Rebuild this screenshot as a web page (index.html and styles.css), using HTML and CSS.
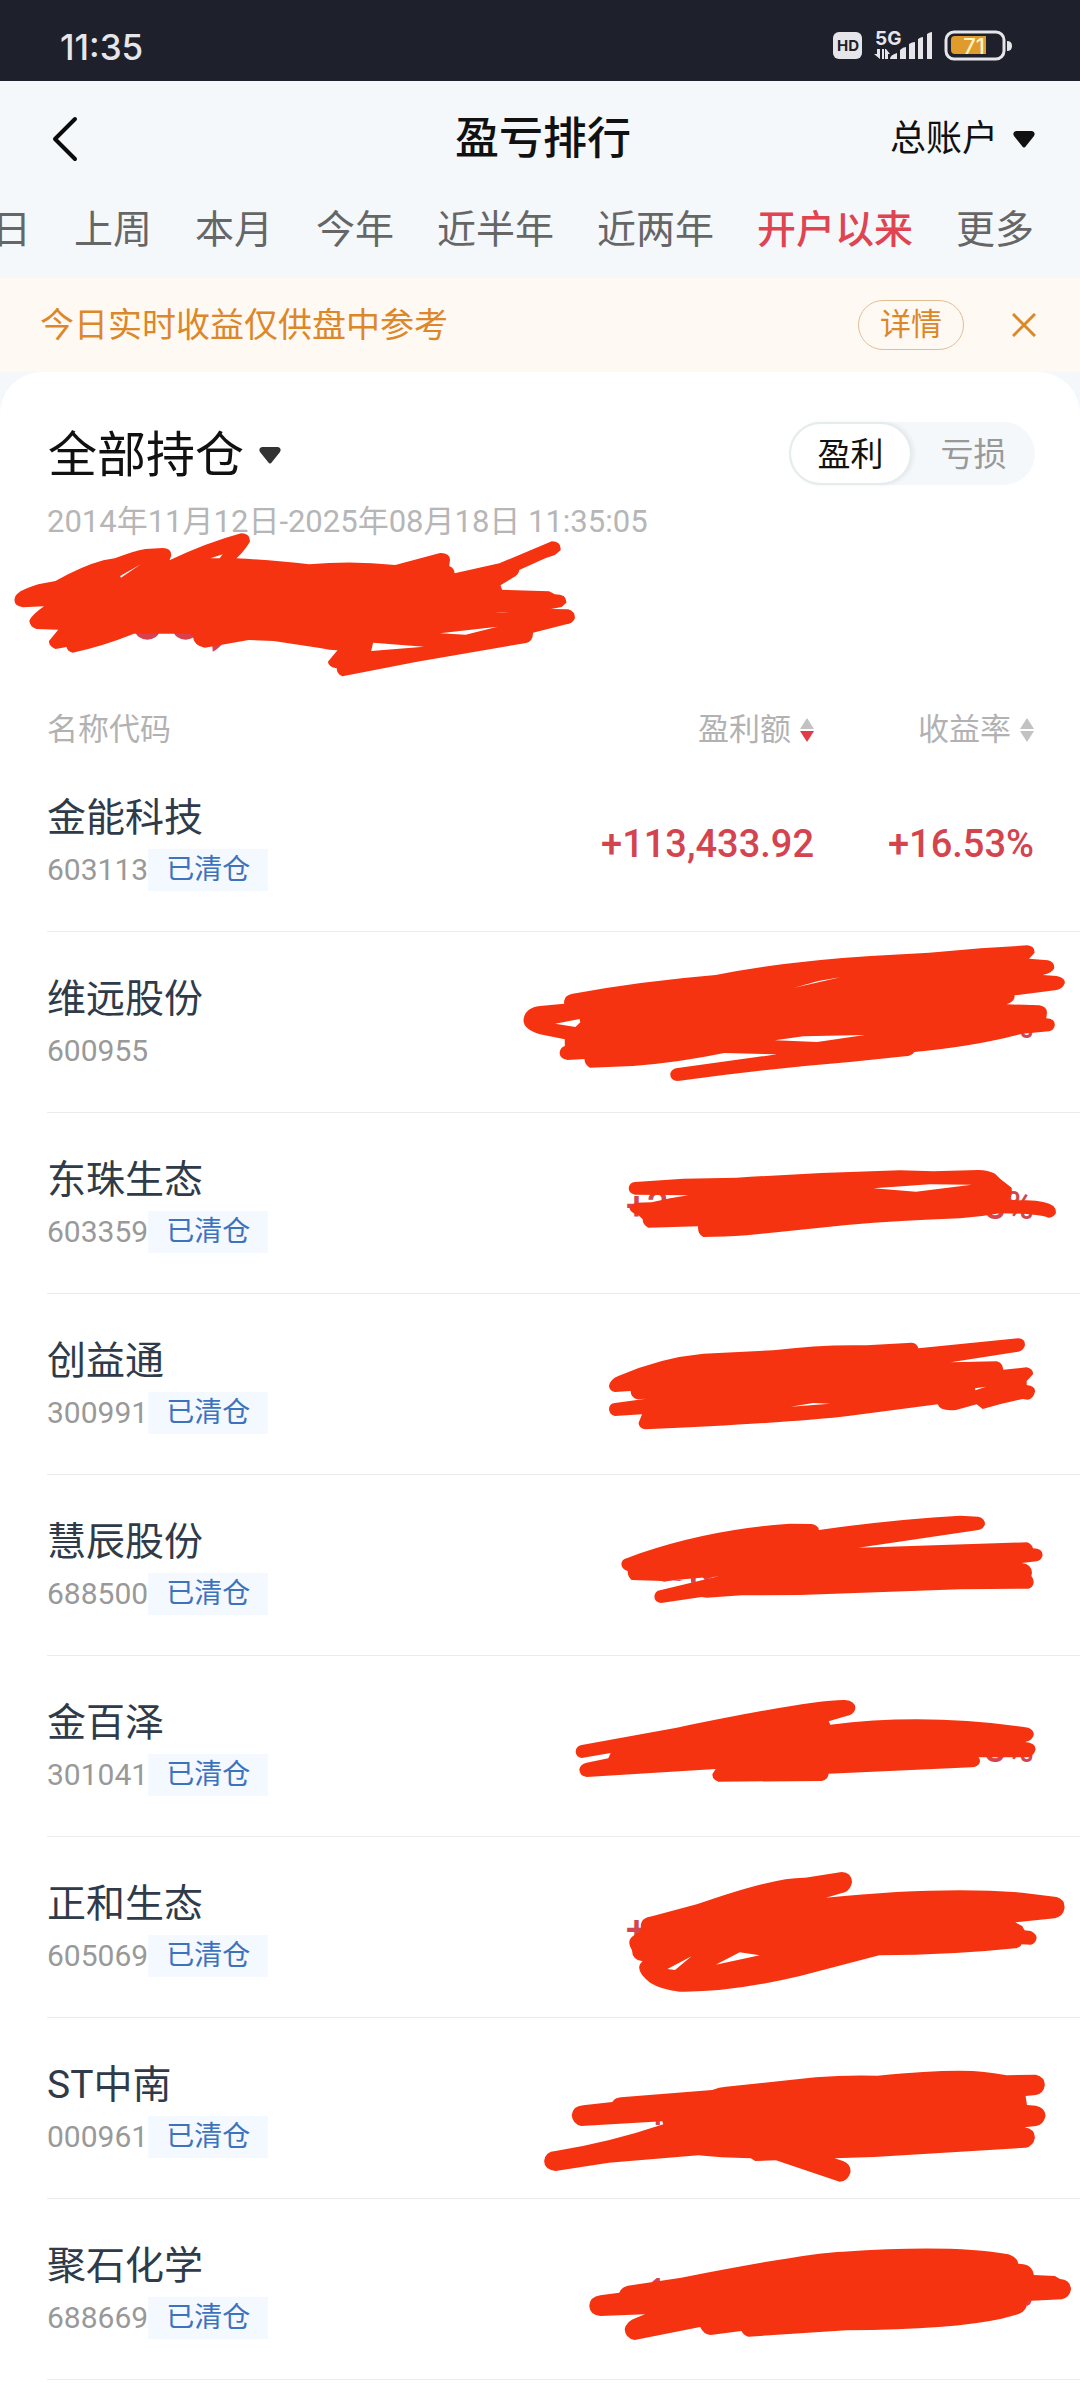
FILE: index.html
```html
<!DOCTYPE html>
<html lang="zh-CN">
<head>
<meta charset="utf-8">
<meta name="viewport" content="width=device-width, initial-scale=1">
<title>盈亏排行</title>
<link rel="stylesheet" href="styles.css">
</head>
<body>
<div class="status">
  <span class="clock">11:35</span>
  <svg class="status-icons" viewBox="833 27 179 41" width="179" height="41" role="img" aria-label="HD 5G 71">
    <rect x="833" y="33" width="29" height="27" rx="6" fill="#e6e6ea"/>
    <text x="848" y="52" class="hd-text" text-anchor="middle">HD</text>
    <text x="875" y="46" class="net-text">5G</text>
    <path d="M880 50v10l-6-5h3v-5zM882 60V50h2v10zM886 50l4 5h-2v5h-3V50z" fill="#e6e6ea"/>
    <path d="M890 60q0-4 7-6v6zM900 60v-9q3-3 6-3v12zM909 60V45q3-2 6-2v17zM918 60V40q3-2 5-2v22zM927 60V35q3-2 5-2v27z" fill="#e6e6ea"/>
    <rect x="946" y="33" width="58" height="27" rx="8" fill="none" stroke="#e6e6ea" stroke-width="3"/>
    <path d="M955 37h31v18h-31q-4 0-4-4V41q0-4 4-4z" fill="#df9b2b"/>
    <path d="M1007 42q5 0 5 5t-5 5z" fill="#e6e6ea"/>
    <text x="974" y="55" class="battery-text" text-anchor="middle">71</text>
  </svg>
</div>

<header class="top">
  <div class="titlebar">
    <button class="back" type="button" aria-label="返回">
      <svg viewBox="0 0 28 46" width="28" height="46"><path d="M24 3 4 23l20 20" fill="none" stroke="#0b0b0b" stroke-width="4" stroke-linecap="round" stroke-linejoin="round"/></svg>
    </button>
    <h1>盈亏排行</h1>
    <label class="picker account">
      <select aria-label="账户"><option>总账户</option></select>
      <svg viewBox="0 0 22 17" width="22" height="17"><path d="M3 0h16q4 1 2 5l-8 10q-2 3-4 0L1 5Q-1 1 3 0z" fill="#111"/></svg>
    </label>
  </div>
  <nav class="tabs">
    <button type="button">日</button>
    <button type="button">上周</button>
    <button type="button">本月</button>
    <button type="button">今年</button>
    <button type="button">近半年</button>
    <button type="button">近两年</button>
    <button type="button" class="active">开户以来</button>
    <button type="button">更多</button>
  </nav>
</header>

<div class="notice">
  <p>今日实时收益仅供盘中参考</p>
  <button type="button" class="detail">详情</button>
  <button type="button" class="close" aria-label="关闭">
    <svg viewBox="0 0 24 24" width="24" height="24"><path d="M1 1l22 22M23 1 1 23" stroke="#dc8728" stroke-width="3" fill="none"/></svg>
  </button>
</div>

<main class="card">
  <section class="summary">
    <div class="summary-head">
      <label class="picker holdings">
        <select aria-label="持仓范围"><option>全部持仓</option></select>
        <svg viewBox="0 0 22 17" width="22" height="17"><path d="M3 0h16q4 1 2 5l-8 10q-2 3-4 0L1 5Q-1 1 3 0z" fill="#333"/></svg>
      </label>
      <div class="switch">
        <label><input type="radio" name="side" checked><span>盈利</span></label>
        <label><input type="radio" name="side"><span>亏损</span></label>
      </div>
    </div>
    <p class="period">2014年11月12日-2025年08月18日 11:35:05</p>
    <div class="total">
      <svg class="scribble-total" viewBox="0 816 1568 498" preserveAspectRatio="none" aria-hidden="true">
        <path class="digits" d="M352 1080h66q-8 26-33 26t-33-26zM452 1080h66q-8 26-33 26t-33-26zM554 1115h28q-6 14-26 27z"/>
        <path d="M38 985C40 965 60 955 100 940L145 930Q215 885 270 868L300 862Q350 840 380 834L425 831Q450 832 447 855L443 868Q540 815 630 787Q655 788 653 812Q640 838 618 862Q720 868 808 880Q920 868 1033 882L1150 846Q1175 845 1176 866L1174 885Q1188 892 1188 907L1305 877L1442 811Q1468 812 1465 838L1450 852L1425 862L1357 897Q1356 912 1340 920L1308 943L1312 956L1435 961L1450 970Q1482 970 1480 995L1468 1008L1440 1014L1485 1015Q1505 1022 1502 1043Q1495 1058 1480 1060L1393 1085Q1393 1110 1375 1116L1090 1172L895 1216Q880 1210 880 1192Q858 1188 857 1172L882 1138Q860 1138 840 1132L715 1110L650 1107L535 1130Q508 1125 504 1098L497 1088L350 1088Q270 1125 190 1145Q175 1140 174 1128L145 1134Q127 1125 128 1110L152 1076L95 1074Q76 1065 77 1048Q85 1030 115 1006L60 1009Q36 1005 38 985ZM314 915L368 880L316 920ZM550 862L582 850L574 862ZM975 1115L1108 1127L970 1140ZM1150 1087L1300 1067L1217 1091ZM1270 1028L1330 1023L1295 1026Z"/>
      </svg>
    </div>
  </section>

  <table class="ranking">
    <thead>
      <tr>
        <th class="col-name" scope="col">名称代码</th>
        <th class="col-amount" scope="col"><button type="button">盈利额<svg viewBox="0 0 14 24" width="14" height="24"><path d="M7 0l7 11H0z" fill="#c2c2c2"/><path d="M0 13h14L7 24z" fill="#e23b47"/></svg></button></th>
        <th class="col-rate" scope="col"><button type="button">收益率<svg viewBox="0 0 14 24" width="14" height="24"><path d="M7 0l7 11H0zM0 13h14L7 24z" fill="#c2c2c2"/></svg></button></th>
      </tr>
    </thead>
    <tbody>
      <tr>
        <td><div class="name">金能科技</div><div class="meta"><span>603113</span><span class="badge">已清仓</span></div></td>
        <td class="num">+113,433.92</td>
        <td class="num rate">+16.53%</td>
      </tr>
      <tr>
        <td><div class="name">维远股份</div><div class="meta"><span>600955</span></div></td>
        <td class="num"></td>
        <td class="num rate">%
          <svg class="scribble wide" viewBox="0 753 1568 543" preserveAspectRatio="none" aria-hidden="true"><path d="M70 960Q72 942 95 938Q300 900 510 882Q720 840 960 825L1130 815L1280 802L1415 793Q1437 795 1436 815L1420 833L1475 838Q1495 843 1493 862Q1488 876 1460 882L1500 885Q1525 890 1524 906Q1518 925 1495 928L1378 943Q1380 960 1355 970L1450 973Q1473 978 1472 995L1470 1012Q1495 1012 1495 1032Q1493 1048 1478 1051L1400 1058Q1270 1095 1087 1113Q1080 1125 1060 1126L900 1143Q640 1165 400 1200Q378 1198 378 1178Q382 1163 400 1161L688 1120L535 1116Q400 1145 270 1155L145 1160Q130 1152 129 1134L80 1137Q58 1133 57 1116Q58 1100 72 1095L72 1075L0 1060Q-48 1045 -48 1018Q-45 980 0 975L70 968ZM44 1028L115 1014L117 1024L103 1038ZM682 1078L765 1066L943 1062L805 1083ZM738 920L808 900L872 889L815 902Z"/></svg>
        </td>
      </tr>
      <tr>
        <td><div class="name">东珠生态</div><div class="meta"><span>603359</span><span class="badge">已清仓</span></div></td>
        <td class="num"><span class="partial">+2</span></td>
        <td class="num rate">3%
          <svg class="scribble" viewBox="0 -84 1560 543" preserveAspectRatio="none" aria-hidden="true"><path d="M206 142Q208 124 225 123L370 113L530 110Q770 95 1020 88L1120 91L1255 87Q1285 88 1305 98L1322 115L1355 140Q1358 165 1345 177L1400 178Q1460 180 1480 195Q1490 205 1487 218Q1478 230 1465 230Q1430 217 1320 217Q1260 228 1200 232Q1020 238 860 252L560 283Q490 288 430 288Q413 280 414 256L265 260Q248 252 248 235L235 222Q210 215 208 200L225 185L275 184L330 172L385 163L225 161Q207 158 206 142ZM940 142L1110 130L1235 131L1068 152Z"/></svg>
        </td>
      </tr>
      <tr>
        <td><div class="name">创益通</div><div class="meta"><span>300991</span><span class="badge">已清仓</span></div></td>
        <td class="num"></td>
        <td class="num rate">
          <svg class="scribble" viewBox="0 459 1560 543" preserveAspectRatio="none" aria-hidden="true"><path d="M147 735Q150 715 175 705Q300 650 430 638L640 628Q780 610 920 613L1055 605Q1072 607 1075 622L1375 592Q1395 592 1395 612Q1392 628 1375 632L1172 664L1310 661Q1328 665 1330 686L1400 679Q1420 683 1419 700L1400 720L1400 732Q1427 735 1425 752Q1420 773 1403 776L1388 774Q1330 785 1268 804L1250 790L1188 807Q1140 812 1133 790L870 824Q700 845 255 865Q235 860 236 845L246 820L165 825Q147 820 147 804Q148 788 165 786L258 773L232 775Q212 770 212 750L165 753Q148 750 147 735ZM692 797L760 786L810 788ZM1245 742L1278 737L1246 748Z"/></svg>
        </td>
      </tr>
      <tr>
        <td><div class="name">慧辰股份</div><div class="meta"><span>688500</span><span class="badge">已清仓</span></div></td>
        <td class="num"></td>
        <td class="num rate">
          <svg class="scribble" viewBox="0 -18 1560 543" preserveAspectRatio="none" aria-hidden="true"><path class="digits" d="M290 296h80l-12 4-20-2-25 4zM393 285h14v20h-14zM425 285h50l-15 3-25 10z"/><path d="M184 250Q185 235 200 232L240 217Q450 145 690 128L755 129Q775 133 777 147Q1000 115 1200 104L1255 107Q1275 112 1275 130Q1270 145 1255 147L895 200L1400 184Q1415 188 1419 202Q1448 203 1448 222Q1445 238 1430 241L1385 246Q1415 250 1416 275L1414 285Q1422 295 1421 305Q1418 320 1405 323L1200 325L720 342L545 343L440 350L425 348L303 366Q283 363 283 345Q286 330 300 328L475 286L310 300L215 297Q203 288 203 270Q186 265 184 250Z"/></svg>
        </td>
      </tr>
      <tr>
        <td><div class="name">金百泽</div><div class="meta"><span>301041</span><span class="badge">已清仓</span></div></td>
        <td class="num"></td>
        <td class="num rate">3%
          <svg class="scribble" viewBox="0 525 1560 543" preserveAspectRatio="none" aria-hidden="true"><path d="M47 812Q48 795 65 792L350 740Q760 655 855 657Q885 660 886 680Q885 695 870 702L806 721L811 731Q1100 695 1405 740Q1423 748 1421 762Q1418 778 1395 783Q1427 785 1427 805Q1423 823 1405 829L1255 829Q1262 835 1259 845Q1253 858 1235 859L806 878Q803 897 785 900L475 902Q456 895 457 880L467 864L80 888Q58 885 58 865Q60 850 80 845L145 832L152 816L65 831Q48 828 47 812Z"/></svg>
        </td>
      </tr>
      <tr>
        <td><div class="name">正和生态</div><div class="meta"><span>605069</span><span class="badge">已清仓</span></div></td>
        <td class="num"><span class="partial">+</span></td>
        <td class="num rate">
          <svg class="scribble wide" viewBox="0 -12 1568 543" preserveAspectRatio="none" aria-hidden="true"><path d="M293 250Q295 230 325 226L455 190Q680 108 770 110L876 93Q905 95 906 123Q903 145 885 154L830 170Q1170 135 1400 155L1500 168Q1525 175 1523 202Q1520 225 1495 232L1380 244L1400 255L1407 268L1425 270Q1443 280 1442 292Q1438 310 1425 311L1398 310Q1395 320 1380 322Q1200 342 985 343L755 405Q550 455 405 452Q350 445 320 425Q270 385 298 361Q268 358 267 328Q250 300 270 285L292 270ZM370 384L440 346L392 387ZM510 371L580 334L638 343Z"/></svg>
        </td>
      </tr>
      <tr>
        <td><div class="name">ST中南</div><div class="meta"><span>000961</span><span class="badge">已清仓</span></div></td>
        <td class="num"></td>
        <td class="num rate">
          <svg class="scribble wide" viewBox="0 531 1568 543" preserveAspectRatio="none" aria-hidden="true"><path class="digits" d="M336 838h12v14h-12z"/><path d="M92 823Q95 795 125 793L210 783Q218 770 235 769L500 747Q520 738 540 737L800 709Q890 701 980 704Q1200 682 1290 693Q1325 697 1355 703L1440 701Q1466 708 1466 732Q1462 758 1440 762L1410 765L1414 792L1440 794Q1468 800 1468 825Q1462 852 1440 855L1407 859Q1438 865 1437 890Q1433 915 1410 920L970 948L855 952L880 960Q902 968 902 992Q895 1020 870 1022L685 958L625 960L612 952Q520 950 460 943L200 965L45 990Q12 985 12 960Q15 932 45 930Q200 905 358 850L355 841L120 855Q95 850 92 823Z"/></svg>
        </td>
      </tr>
      <tr>
        <td><div class="name">聚石化学</div><div class="meta"><span>688669</span><span class="badge">已清仓</span></div></td>
        <td class="num"></td>
        <td class="num rate">
          <svg class="scribble wide" viewBox="0 -6 1568 543" preserveAspectRatio="none" aria-hidden="true"><path class="digits" d="M325 243l14-12h9v12zM1410 298h18l-5 12-9 5z"/><path d="M143 315Q145 287 175 283L230 275Q238 258 255 254L410 230Q780 155 880 152Q1200 130 1360 160Q1385 168 1389 188Q1430 188 1434 222L1495 225L1510 234Q1540 235 1542 265Q1538 290 1515 295L1415 300Q1415 330 1390 339L1340 353Q1200 385 890 388L605 407Q590 402 585 390L495 402Q475 400 465 378L275 417Q247 412 246 385Q250 360 280 350L305 340L175 345Q145 342 143 315Z"/></svg>
        </td>
      </tr>
    </tbody>
  </table>
</main>
</body>
</html>
```
FILE: styles.css
```css
* { box-sizing: border-box; margin: 0; padding: 0; }

body {
  display: flex;
  flex-direction: column;
  min-height: 100vh;
  background: #f4f8fb;
  color: #111;
  font-family: Roboto, "Noto Sans CJK SC", sans-serif;
  overflow-x: hidden;
}

button, select, input {
  font: inherit;
  color: inherit;
  background: none;
  border: 0;
}

svg { display: block; flex: none; }

.status {
  display: flex;
  align-items: center;
  justify-content: space-between;
  height: 81px;
  padding: 12px 68px 0 60px;
  background: #1e212b;
  color: #e6e6ea;
}
.clock {
  font-family: Inter, sans-serif;
  font-size: 35px;
  font-weight: 500;
}
.status-icons text { font-family: Inter, sans-serif; font-weight: 700; }
.hd-text { font-size: 15px; fill: #1e212b; }
.net-text { font-size: 19px; fill: #e6e6ea; }
.status-icons .battery-text { font-size: 22px; font-weight: 500; fill: #fff3c4; }

.titlebar {
  display: grid;
  grid-template-columns: 1fr auto 1fr;
  align-items: center;
  height: 114px;
  padding: 2px 45px 0 51px;
}
.back { justify-self: start; }
h1 { font-size: 44px; font-weight: 500; line-height: 60px; }

.picker { display: flex; align-items: center; }
.picker select { appearance: none; }
.account { justify-self: end; gap: 14px; font-size: 36px; }
.holdings { gap: 14px; padding-top: 4px; font-size: 49px; }

.tabs {
  display: flex;
  justify-content: flex-end;
  gap: 43px;
  height: 83px;
  padding: 8px 46px 0 0;
  overflow: hidden;
  color: #666;
  font-size: 39px;
  line-height: 54px;
}
.tabs button { flex: none; height: 54px; }
.tabs .active { color: #df4450; font-weight: 500; }

.notice {
  display: flex;
  align-items: center;
  height: 94px;
  padding: 0 44px 0 40px;
  background: #fff9f4;
  color: #dc8728;
}
.notice p { flex: 1; padding-bottom: 6px; font-size: 34px; }
.detail {
  height: 50px;
  padding: 0 21px;
  border: 1px solid #e0bf95;
  border-radius: 25px;
  font-size: 31px;
  line-height: 46px;
}
.close { margin-left: 48px; }

.card {
  flex: 1;
  padding-top: 50px;
  background: #fff;
  border-radius: 42px 42px 0 0;
}
.summary-head {
  display: flex;
  align-items: center;
  justify-content: space-between;
  height: 63px;
  padding: 0 45px 0 48px;
}
.switch {
  display: flex;
  height: 63px;
  border-radius: 32px;
  background: #f4f8fb;
  color: #999;
  font-size: 33px;
}
.switch input { position: absolute; opacity: 0; }
.switch span {
  display: block;
  width: 123px;
  height: 63px;
  border: 2px solid transparent;
  border-radius: 32px;
  line-height: 62px;
  text-align: center;
}
.switch :checked + span {
  border-color: #e6ebec;
  background: #fff;
  background-clip: padding-box;
  color: #111;
  box-shadow: 2px 0 4px rgba(0, 0, 0, 0.06);
}
.period {
  margin-top: 16px;
  padding-left: 47px;
  color: #b6b6b6;
  font-size: 31px;
  line-height: 42px;
}
.total { position: relative; height: 166px; }

.scribble-total {
  position: absolute;
  top: 0;
  left: 0;
  width: 600px;
  height: 166px;
}
.scribble {
  position: absolute;
  top: 0;
  right: 0;
  width: 520px;
  height: 181px;
}
.scribble.wide { width: 540px; }
.scribble, .scribble-total {
  overflow: visible;
  fill: #f63310;
  fill-rule: evenodd;
  pointer-events: none;
}
.digits { fill: #d8414f; }

.ranking {
  width: calc(100% - 47px);
  margin-left: 47px;
  border-spacing: 0;
  table-layout: fixed;
}
.ranking th {
  height: 42px;
  color: #b2b2b2;
  font-size: 31px;
  font-weight: 400;
  line-height: 42px;
  text-align: left;
}
.ranking th button { display: flex; align-items: center; gap: 9px; margin-left: auto; }
.col-amount { width: 340px; }
.ranking .col-rate { width: 266px; padding-right: 46px; }

.ranking td {
  height: 181px;
  padding-top: 41px;
  border-bottom: 1px solid #ececec;
  vertical-align: top;
}
.name { color: #2f3b49; font-size: 39px; line-height: 52px; }
.meta {
  display: flex;
  margin-top: 5px;
  color: #999;
  font-size: 30px;
  line-height: 42px;
}
.badge {
  padding: 0 18px;
  background: #f4f8ff;
  color: #3d72bd;
  font-size: 28px;
  line-height: 42px;
}
.ranking .num {
  padding-top: 71px;
  color: #d3444f;
  font-size: 38px;
  font-weight: 500;
  line-height: 44px;
  text-align: right;
}
.ranking .rate { position: relative; padding-right: 46px; }
.partial { display: inline-block; width: 188px; text-align: left; }
```
